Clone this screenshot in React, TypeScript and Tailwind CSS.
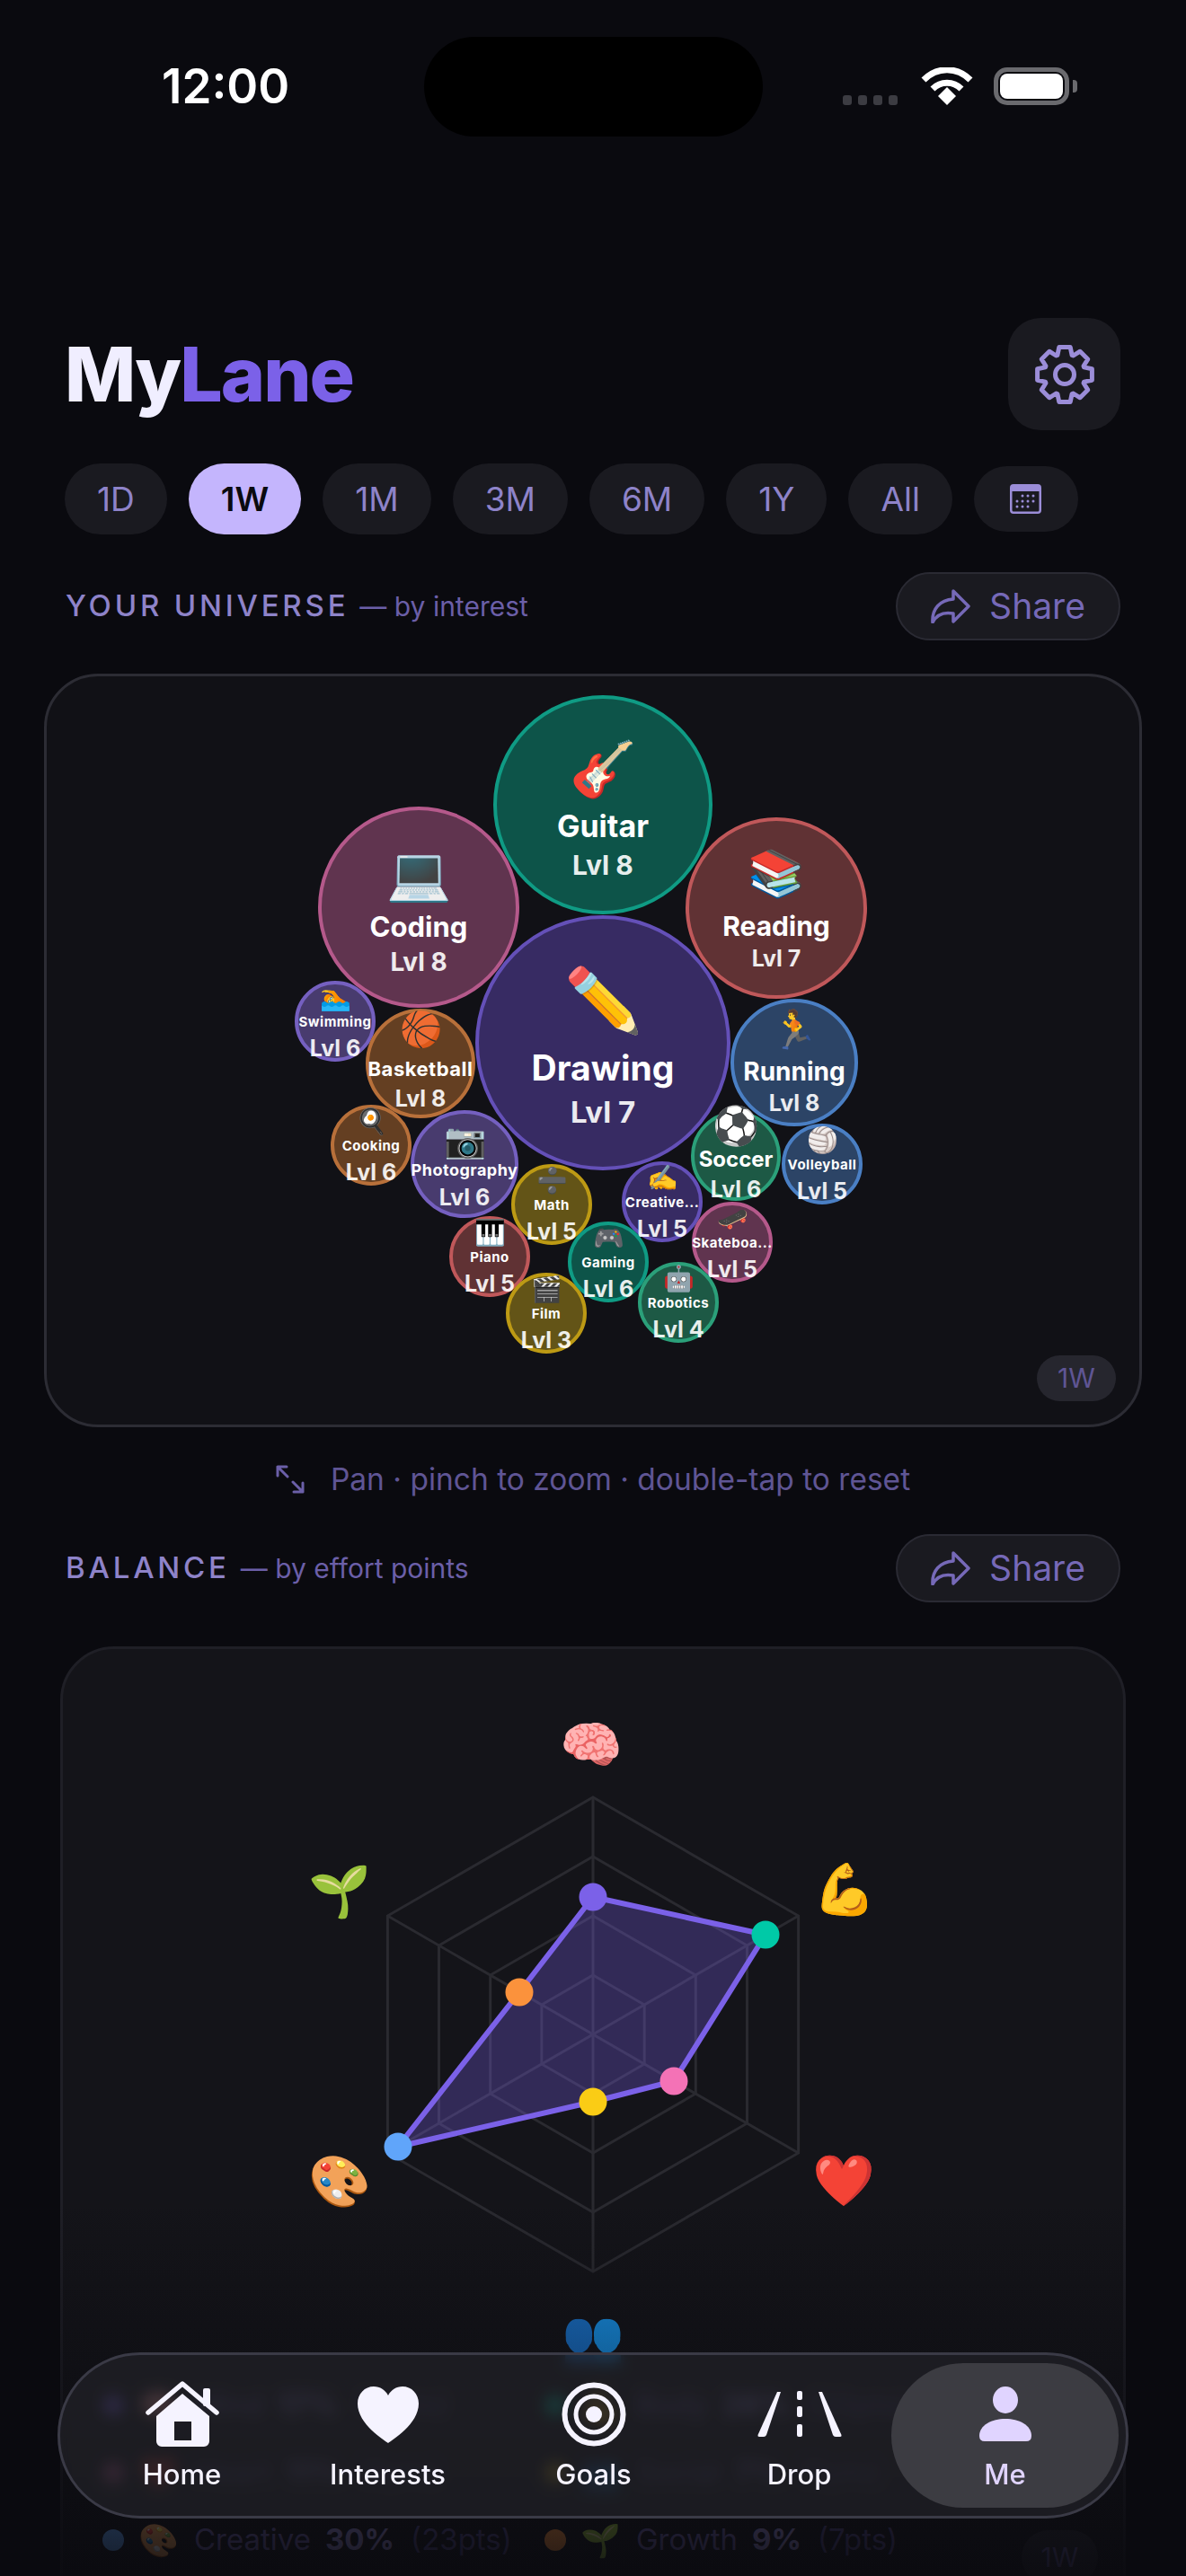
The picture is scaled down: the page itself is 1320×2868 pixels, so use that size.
// MyLane "Me" screen
const FONT = "font-['Inter','Noto_Sans',sans-serif]"

type Tier = { pad: string; emoji: string; name: string; lvl: string }

const TIER_DRAWING: Tier = {
  pad: 'pt-[12px]',
  emoji: 'h-[76px] text-[70px] leading-[76px]',
  name: 'mt-[16px] h-[44px] text-[39px] leading-[44px] font-bold',
  lvl: 'mt-[6px] h-[42px] text-[33px] leading-[42px] font-bold',
}
const TIER_GUITAR: Tier = {
  pad: 'pt-[11px]',
  emoji: 'h-[66px] text-[60px] leading-[66px]',
  name: 'mt-[13px] h-[38px] text-[34px] leading-[38px] font-bold',
  lvl: 'mt-[6px] h-[36px] text-[30px] leading-[36px] font-bold',
}
const TIER_CODING: Tier = {
  pad: 'pt-[9px]',
  emoji: 'h-[64px] text-[58px] leading-[64px]',
  name: 'mt-[9px] h-[38px] text-[31px] leading-[38px] font-bold',
  lvl: 'mt-[2px] h-[36px] text-[28px] leading-[36px] font-bold',
}
const TIER_READING: Tier = {
  pad: 'pt-[5px]',
  emoji: 'h-[56px] text-[51px] leading-[56px]',
  name: 'mt-[14px] h-[34px] text-[30px] leading-[34px] font-bold',
  lvl: 'mt-[3px] h-[32px] text-[25px] leading-[32px] font-bold',
}
const TIER_RUNNING: Tier = {
  pad: '',
  emoji: 'h-[45px] text-[42px] leading-[45px]',
  name: 'mt-[10px] h-[30px] text-[28px] leading-[30px] font-bold',
  lvl: 'mt-[5px] h-[30px] text-[25px] leading-[30px] font-bold',
}
const TIER_SOCCER: Tier = {
  pad: 'pb-[6px]',
  emoji: 'h-[45px] text-[42px] leading-[45px]',
  name: 'mt-[2px] h-[28px] text-[24px] leading-[28px] font-bold',
  lvl: 'mt-[4px] h-[30px] text-[25px] leading-[30px] font-bold',
}
const TIER_BASKET: Tier = {
  pad: 'pb-[6px]',
  emoji: 'h-[42px] text-[38px] leading-[42px]',
  name: 'mt-[11px] h-[26px] text-[22px] leading-[26px] font-bold tracking-[0.5px]',
  lvl: 'mt-[5px] h-[30px] text-[25px] leading-[30px] font-bold',
}
const TIER_PHOTO: Tier = {
  pad: 'pt-[4px]',
  emoji: 'h-[42px] text-[38px] leading-[42px]',
  name: 'mt-[1px] h-[24px] text-[18px] leading-[24px] font-bold tracking-[0.5px]',
  lvl: 'mt-[3px] h-[30px] text-[25px] leading-[30px] font-bold',
}
const TIER_SMALL: Tier = {
  pad: 'pt-[3px]',
  emoji: 'h-[30px] text-[28px] leading-[30px]',
  name: 'mt-[3px] h-[20px] text-[15px] leading-[20px] font-bold tracking-[0.5px]',
  lvl: 'mt-[4px] h-[30px] text-[25px] leading-[30px] font-bold',
}

const PURPLE = ['#372b63', '#6450b8']
const VIOLET = ['#483b6e', '#7560c0']
const TEAL = ['#0d5449', '#0f9b84']
const GREEN = ['#1d5945', '#2ba07a']
const PINK = ['#60344f', '#b5598b']
const RED = ['#603234', '#c0585a']
const BLUE = ['#2c4466', '#4a7fc4']
const BROWN = ['#643f22', '#b8703a']
const GOLD = ['#635417', '#bd9a14']

type Bubble = { name: string; emoji: string; x: number; y: number; r: number; c: string[]; lvl: number; tier: Tier }

const bubbles: Bubble[] = [
  { name: 'Drawing', emoji: '✏️', x: 671, y: 1161, r: 142, c: PURPLE, lvl: 7, tier: TIER_DRAWING },
  { name: 'Guitar', emoji: '🎸', x: 671, y: 896, r: 122, c: TEAL, lvl: 8, tier: TIER_GUITAR },
  { name: 'Coding', emoji: '💻', x: 466, y: 1010, r: 112, c: PINK, lvl: 8, tier: TIER_CODING },
  { name: 'Reading', emoji: '📚', x: 864, y: 1011, r: 101, c: RED, lvl: 7, tier: TIER_READING },
  { name: 'Running', emoji: '🏃', x: 884, y: 1183, r: 71, c: BLUE, lvl: 8, tier: TIER_RUNNING },
  { name: 'Swimming', emoji: '🏊', x: 373, y: 1137, r: 45, c: VIOLET, lvl: 6, tier: TIER_SMALL },
  { name: 'Basketball', emoji: '🏀', x: 468, y: 1184, r: 61, c: BROWN, lvl: 8, tier: TIER_BASKET },
  { name: 'Cooking', emoji: '🍳', x: 413, y: 1275, r: 45, c: BROWN, lvl: 6, tier: TIER_SMALL },
  { name: 'Photography', emoji: '📷', x: 517, y: 1296, r: 60, c: VIOLET, lvl: 6, tier: TIER_PHOTO },
  { name: 'Soccer', emoji: '⚽', x: 819, y: 1287, r: 50, c: GREEN, lvl: 6, tier: TIER_SOCCER },
  { name: 'Volleyball', emoji: '🏐', x: 915, y: 1296, r: 45, c: BLUE, lvl: 5, tier: TIER_SMALL },
  { name: 'Creative...', emoji: '✍️', x: 737, y: 1338, r: 45, c: PURPLE, lvl: 5, tier: TIER_SMALL },
  { name: 'Math', emoji: '➗', x: 614, y: 1341, r: 45, c: GOLD, lvl: 5, tier: TIER_SMALL },
  { name: 'Skateboa...', emoji: '🛹', x: 815, y: 1383, r: 45, c: PINK, lvl: 5, tier: TIER_SMALL },
  { name: 'Piano', emoji: '🎹', x: 545, y: 1399, r: 45, c: RED, lvl: 5, tier: TIER_SMALL },
  { name: 'Film', emoji: '🎬', x: 608, y: 1462, r: 45, c: GOLD, lvl: 3, tier: TIER_SMALL },
  { name: 'Gaming', emoji: '🎮', x: 677, y: 1405, r: 45, c: TEAL, lvl: 6, tier: TIER_SMALL },
  { name: 'Robotics', emoji: '🤖', x: 755, y: 1450, r: 45, c: GREEN, lvl: 4, tier: TIER_SMALL },
]

const ranges = ['1D', '1W', '1M', '3M', '6M', '1Y', 'All']

const legend = [
  { color: 'bg-[#7b61e8]', emoji: '🧠', label: 'Mind', pct: '17%', pts: '(13pts)' },
  { color: 'bg-[#00c9a7]', emoji: '💪', label: 'Body', pct: '26%', pts: '(20pts)' },
  { color: 'bg-[#f472b6]', emoji: '❤️', label: 'Heart', pct: '11%', pts: '(8pts)' },
  { color: 'bg-[#facc15]', emoji: '👥', label: 'Social', pct: '7%', pts: '(5pts)' },
  { color: 'bg-[#60a5fa]', emoji: '🎨', label: 'Creative', pct: '30%', pts: '(23pts)' },
  { color: 'bg-[#fb923c]', emoji: '🌱', label: 'Growth', pct: '9%', pts: '(7pts)' },
]

// radar, in page coordinates (the svg's viewBox starts at the card's corner)
const CX = 660
const CY = 2265
function hexPoints(r: number) {
  return [0, 1, 2, 3, 4, 5]
    .map((i) => {
      const a = (Math.PI / 3) * i - Math.PI / 2
      return `${(CX + r * Math.cos(a)).toFixed(1)},${(CY + r * Math.sin(a)).toFixed(1)}`
    })
    .join(' ')
}
const radarDots = [
  { x: 660, y: 2112, fill: '#7b61e8' },
  { x: 852, y: 2154, fill: '#00c9a7' },
  { x: 750, y: 2317, fill: '#f472b6' },
  { x: 660, y: 2340, fill: '#facc15' },
  { x: 443, y: 2390, fill: '#60a5fa' },
  { x: 578, y: 2218, fill: '#fb923c' },
]
const radarEmoji = [
  { e: '🧠', x: 658, y: 1942 },
  { e: '💪', x: 940, y: 2103 },
  { e: '❤️', x: 939, y: 2427 },
  { e: '🎨', x: 378, y: 2428 },
  { e: '🌱', x: 378, y: 2105 },
  { e: '👥', x: 660, y: 2600 },
]

function gearPath() {
  const teeth = 8
  const out = 31
  const inn = 23
  let d = ''
  for (let i = 0; i < teeth; i++) {
    const c = (Math.PI * 2 * i) / teeth - Math.PI / 2
    const pts: [number, number][] = [
      [inn, c - 0.36],
      [out, c - 0.2],
      [out, c + 0.2],
      [inn, c + 0.36],
    ]
    pts.forEach(([r, a], j) => {
      const x = (33 + r * Math.cos(a)).toFixed(1)
      const y = (33 + r * Math.sin(a)).toFixed(1)
      d += `${i === 0 && j === 0 ? 'M' : 'L'}${x} ${y} `
    })
  }
  return d + 'Z'
}

function StatusBar() {
  return (
    <div className="grid h-[152px] grid-cols-[1fr_377px_1fr] pt-[41px]">
      <div className="flex items-center pl-[180px] text-[53px] font-semibold leading-none text-white">12:00</div>
      <div className="h-[111px] rounded-[56px] bg-black" />
      <div className="flex items-start pl-[89px] pt-[34px]">
        <div className="mt-[31px] flex gap-[7px]">
          <span className="h-[11px] w-[10px] rounded-[3px] bg-[#3c3c42]" />
          <span className="h-[11px] w-[10px] rounded-[3px] bg-[#3c3c42]" />
          <span className="h-[11px] w-[10px] rounded-[3px] bg-[#3c3c42]" />
          <span className="h-[11px] w-[10px] rounded-[3px] bg-[#3c3c42]" />
        </div>
        <svg className="ml-[26px]" width="58" height="42" viewBox="0 0 58 42" fill="none" stroke="white" strokeWidth="7">
          <path d="M3 14 C18 -1 40 -1 55 14" />
          <path d="M13 24 C22 15 36 15 45 24" />
          <path d="M19 32 L29 22 L39 32 L29 42 Z" fill="white" stroke="none" />
        </svg>
        <div className="ml-[23px] flex items-center">
          <div className="flex h-[42px] w-[84px] items-center justify-center rounded-[15px] border-[5px] border-[#6a6a6e]">
            <div className="h-[28px] w-[70px] rounded-[8px] bg-white" />
          </div>
          <div className="ml-[4px] h-[14px] w-[5px] rounded-r-[4px] bg-[#6a6a6e]" />
        </div>
      </div>
    </div>
  )
}

function ShareIcon() {
  return (
    <svg width="44" height="38" viewBox="0 0 44 38" fill="none" stroke="#7669b8" strokeWidth="3.5" strokeLinejoin="round">
      <path d="M25 2 L42 19 L25 36 V27 C14 25 6 29 2 37 C1 22 10 12 25 11 Z" />
    </svg>
  )
}

function SectionHead({ title, sub }: { title: string; sub: string }) {
  return (
    <div className="flex h-[76px] items-center justify-between pl-[73px] pr-[73px]">
      <div className="flex items-baseline">
        <span className="text-[33px] font-medium tracking-[3.8px] text-[#8e83c9]">{title}</span>
        <span className="ml-[12px] text-[30px] text-[#6b5fa8]">{sub}</span>
      </div>
      <div className="flex h-[76px] w-[250px] items-center justify-center gap-[21px] rounded-[38px] border-[2px] border-[#2a2a33] bg-[#1a1a20] text-[39px] text-[#7669b8]">
        <ShareIcon />
        <span>Share</span>
      </div>
    </div>
  )
}

function BubbleView({ b }: { b: Bubble }) {
  return (
    <div
      className={`absolute flex flex-col items-center justify-center whitespace-nowrap rounded-full border-[4px] text-white ${b.tier.pad}`}
      style={{
        left: b.x - b.r - 52,
        top: b.y - b.r - 753,
        width: b.r * 2,
        height: b.r * 2,
        backgroundColor: b.c[0],
        borderColor: b.c[1],
      }}
    >
      <div className={b.tier.emoji}>{b.emoji}</div>
      <div className={b.tier.name}>{b.name}</div>
      <div className={`text-white/90 ${b.tier.lvl}`}>Lvl {b.lvl}</div>
    </div>
  )
}

function NavItem({ label, children }: { label: string; children: React.ReactNode }) {
  return (
    <div className="flex w-[229px] flex-col items-center text-white">
      <div className="flex h-[80px] items-center">{children}</div>
      <div className="mt-[7px] text-[31px] font-medium leading-[40px] text-[#f5f3ff]">{label}</div>
    </div>
  )
}

function BottomNav() {
  return (
    <div className="absolute left-[64px] top-[2619px] flex h-[185px] w-[1192px] items-center rounded-[92px] border-[3px] border-[#3a3a46] bg-[#222228]/70 pl-[21px] backdrop-blur-[8px]">
      <NavItem label="Home">
        <svg width="82" height="74" viewBox="0 0 82 74" fill="#f5f3ff">
          <path d="M3 35 L41 3 L79 35" fill="none" stroke="#f5f3ff" strokeWidth="5.5" strokeLinecap="round" strokeLinejoin="round" />
          <rect x="64" y="8" width="8" height="20" rx="2" />
          <path fillRule="evenodd" d="M12 39 L41 14 L71 39 V67 a6 6 0 0 1 -6 6 H18 a6 6 0 0 1 -6 -6 Z M32 45 V66 H51 V45 Z" />
        </svg>
      </NavItem>
      <NavItem label="Interests">
        <svg width="68" height="63" viewBox="0 0 68 63" fill="#f5f3ff">
          <path d="M34 63 C30 60 0 42 0 19 C0 8 8 0 18 0 C25 0 31 4 34 10 C37 4 43 0 50 0 C60 0 68 8 68 19 C68 42 38 60 34 63 Z" />
        </svg>
      </NavItem>
      <NavItem label="Goals">
        <svg width="72" height="72" viewBox="0 0 72 72" fill="none" stroke="#f5f3ff">
          <circle cx="36" cy="36" r="32.5" strokeWidth="6" />
          <circle cx="36" cy="36" r="20" strokeWidth="5" />
          <circle cx="36" cy="36" r="9" fill="#f5f3ff" stroke="none" />
        </svg>
      </NavItem>
      <NavItem label="Drop">
        <svg width="94" height="52" viewBox="0 0 94 52" fill="#f5f3ff">
          <path d="M22 1 L26 1 L10 49 Q9 51 7 51 H2 Q0 51 0.5 49 Z" />
          <path d="M72 1 L68 1 L84 49 Q85 51 87 51 H92 Q94 51 93.5 49 Z" />
          <rect x="44" y="0" width="6" height="10" rx="2" />
          <rect x="44" y="17" width="6" height="12" rx="2" />
          <rect x="44" y="37" width="6" height="14" rx="2" />
        </svg>
      </NavItem>
      <div className="-ml-[12px] flex h-[161px] w-[253px] flex-col items-center justify-center rounded-[80px] bg-[#3c3c42]">
        <div className="flex h-[80px] items-center">
          <svg width="58" height="62" viewBox="0 0 58 62" fill="#e0d4ff">
            <ellipse cx="29" cy="15" rx="14" ry="15" />
            <path d="M0 55 C0 43 14 36 29 36 C44 36 58 43 58 55 Q58 61 52 61 H6 Q0 61 0 55 Z" />
          </svg>
        </div>
        <div className="mt-[7px] text-[31px] font-medium leading-[40px] text-[#e0d4ff]">Me</div>
      </div>
    </div>
  )
}

export default function App() {
  const gear = gearPath()
  return (
    <div className={`relative h-[2868px] w-[1320px] overflow-hidden bg-[#0a0a0f] ${FONT}`}>
      <StatusBar />

      {/* titulo */}
      <div className="mt-[202px] flex h-[125px] items-center justify-between pl-[72px] pr-[73px]">
        <div className="text-[84px] font-extrabold tracking-[-2px]">
          <span className="text-[#f0eeff]">My</span>
          <span className="text-[#7b61e8]">Lane</span>
        </div>
        <div className="flex h-[125px] w-[125px] items-center justify-center rounded-[36px] bg-[#1a1a20]">
          <svg width="66" height="66" viewBox="0 0 66 66" fill="none" stroke="#9b8dd8" strokeWidth="5" strokeLinejoin="round">
            <path d={gear} />
            <circle cx="33" cy="33" r="10.5" />
          </svg>
        </div>
      </div>

      {/* periodo */}
      <div className="mt-[37px] flex items-center gap-[24px] pl-[72px]">
        {ranges.map((r) =>
          r === '1W' ? (
            <div key={r} className="flex h-[79px] items-center rounded-[40px] bg-[#c4b5fd] px-[36px] text-[37px] font-semibold text-[#0a0a0f]">
              {r}
            </div>
          ) : (
            <div key={r} className="flex h-[79px] items-center rounded-[40px] bg-[#1a1a20] px-[36px] text-[37px] text-[#8e83c9]">
              {r}
            </div>
          ),
        )}
        <div className="flex h-[73px] w-[116px] items-center justify-center rounded-[37px] bg-[#1a1a20]">
          <svg width="35" height="33" viewBox="0 0 35 33" fill="#9b8dd8">
            <path fillRule="evenodd" d="M4 0 H31 a4 4 0 0 1 4 4 V29 a4 4 0 0 1 -4 4 H4 a4 4 0 0 1 -4 -4 V4 a4 4 0 0 1 4 -4 Z M2.5 8 V29 a1.5 1.5 0 0 0 1.5 1.5 H31 a1.5 1.5 0 0 0 1.5 -1.5 V8 Z" />
            <g>
              <circle cx="14" cy="13" r="1.5" /><circle cx="20" cy="13" r="1.5" /><circle cx="26" cy="13" r="1.5" />
              <circle cx="8" cy="19" r="1.5" /><circle cx="14" cy="19" r="1.5" /><circle cx="20" cy="19" r="1.5" /><circle cx="26" cy="19" r="1.5" />
              <circle cx="8" cy="25" r="1.5" /><circle cx="14" cy="25" r="1.5" /><circle cx="20" cy="25" r="1.5" />
            </g>
          </svg>
        </div>
      </div>

      <div className="mt-[42px]">
        <SectionHead title="YOUR UNIVERSE" sub="— by interest" />
      </div>

      {/* universo */}
      <div className="relative mx-[49px] mt-[37px] h-[839px] rounded-[60px] border-[3px] border-[#2c2c34] bg-[#111116]">
        {bubbles.map((b) => (
          <BubbleView key={b.name} b={b} />
        ))}
        <div className="absolute bottom-[26px] right-[26px] flex h-[51px] w-[88px] items-center justify-center rounded-[26px] bg-[#26262e] text-[30px] text-[#5f5594]">
          1W
        </div>
      </div>

      <div className="mt-[36px] flex h-[44px] items-center justify-center gap-[29px] text-[33.5px] text-[#5f5594]">
        <svg width="32" height="32" viewBox="0 0 32 32" fill="none" stroke="#6b5fa8" strokeWidth="3" strokeLinecap="round" strokeLinejoin="round">
          <path d="M2 12 V2 H12 M2 2 L13 13 M30 20 V30 H20 M30 30 L19 19" />
        </svg>
        <span>Pan · pinch to zoom · double-tap to reset</span>
      </div>

      <div className="mt-[39px]">
        <SectionHead title="BALANCE" sub="— by effort points" />
      </div>

      {/* balance */}
      <div className="relative mx-[67px] mt-[49px] h-[1100px] rounded-[60px] border-[3px] border-[#1f1f26] bg-[#141419]">
        <svg className="block" width="1180" height="806" viewBox="70 1836 1180 806">
          {[264, 198, 132, 66].map((r) => (
            <polygon key={r} points={hexPoints(r)} fill="none" stroke="#2a2a30" strokeWidth="3" />
          ))}
          <line x1={CX} y1={CY - 264} x2={CX} y2={CY + 264} stroke="#2a2a30" strokeWidth="3" />
          <line x1={CX - 228.6} y1={CY - 132} x2={CX + 228.6} y2={CY + 132} stroke="#2a2a30" strokeWidth="3" />
          <line x1={CX - 228.6} y1={CY + 132} x2={CX + 228.6} y2={CY - 132} stroke="#2a2a30" strokeWidth="3" />
          <polygon
            points={radarDots.map((d) => `${d.x},${d.y}`).join(' ')}
            fill="#7b61e8"
            fillOpacity="0.3"
            stroke="#7b61e8"
            strokeWidth="6"
            strokeLinejoin="round"
          />
          {radarDots.map((d) => (
            <circle key={d.fill} cx={d.x} cy={d.y} r="15.5" fill={d.fill} />
          ))}
          {radarEmoji.map((m) => (
            <text key={m.e} x={m.x} y={m.y} textAnchor="middle" dominantBaseline="central" fontSize="56">
              {m.e}
            </text>
          ))}
        </svg>
        <div className="grid grid-cols-[492px_1fr] gap-y-[31px] pl-[44px] pt-[14px]">
          {legend.map((l) => (
            <div key={l.label} className="flex h-[44px] items-center text-[33px] text-[#6b5fa8]">
              <span className={`h-[24px] w-[24px] rounded-full ${l.color}`} />
              <span className="ml-[16px] w-[44px] text-[36px] leading-none">{l.emoji}</span>
              <span className="ml-[18px]">{l.label}</span>
              <span className="ml-[16px] font-bold text-[#8e83c9]">{l.pct}</span>
              <span className="ml-[18px] text-[#4f4685]">{l.pts}</span>
            </div>
          ))}
        </div>
        <div className="absolute right-[28px] top-[981px] flex h-[60px] w-[85px] items-center justify-center rounded-[30px] bg-[#26262e] text-[30px] text-[#5f5594]">
          1W
        </div>
      </div>

      {/* fade no fim da tela */}
      <div className="pointer-events-none absolute inset-x-0 bottom-0 h-[420px] bg-linear-to-b from-transparent to-[#0a0a0f]/90" />

      <BottomNav />
    </div>
  )
}
